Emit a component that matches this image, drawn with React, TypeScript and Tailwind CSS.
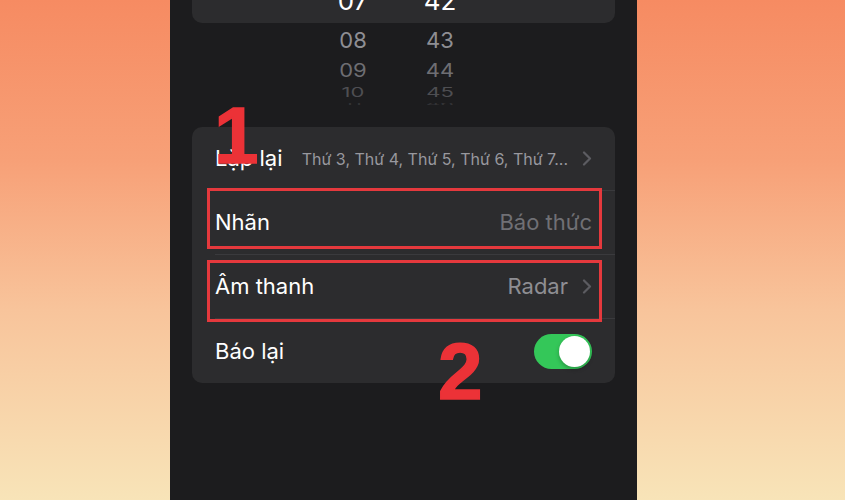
import { useState } from "react";

type WheelRow = {
  hour: string;
  minute: string;
  height: string;
  className: string;
};

// rows under the selected time, shrinking as the wheel turns away
const wheelRows: WheelRow[] = [
  { hour: "08", minute: "43", height: "h-[34px] leading-[34px]", className: "text-[#8e8e93]" },
  { hour: "09", minute: "44", height: "h-[26px] leading-[26px]", className: "text-[#6e6e73] scale-y-[0.85]" },
  { hour: "10", minute: "45", height: "h-[18px] leading-[18px]", className: "text-[#4e4e52] scale-y-[0.6]" },
  { hour: "11", minute: "46", height: "h-[6px] leading-[6px]", className: "text-[#3a3a3d] scale-y-[0.25]" },
];

const Chevron = () => (
  <svg width="10" height="15" viewBox="0 0 10 15" fill="none" className="shrink-0">
    <polyline
      points="2,1.5 8,7.5 2,13.5"
      stroke="#5c5c61"
      strokeWidth="2.2"
      strokeLinecap="round"
      strokeLinejoin="round"
    />
  </svg>
);

const Row = ({ children, last }: { children: React.ReactNode; last?: boolean }) => (
  <div className="pl-[23px]">
    <div
      className={`h-[64px] flex items-center justify-between pr-[23px] ${
        last ? "" : "border-b border-[#3a3a3d]"
      }`}
    >
      {children}
    </div>
  </div>
);

const App = () => {
  const [snooze, setSnooze] = useState(true);

  return (
    <div className="w-[845px] h-[500px] flex bg-[linear-gradient(180deg,#f68b62_0%,#f7a077_32%,#f8c49b_62%,#f8e4b8_100%)] font-['Inter',sans-serif] overflow-hidden">
      <div className="ml-[170px] w-[467px] h-full bg-[#1c1c1e] relative">
        {/* time wheel */}
        <div className="h-[127px] overflow-hidden">
          <div className="mx-[22px] h-[23px] rounded-b-[10px] bg-[#2c2c2e] overflow-hidden">
            <div className="flex pl-[131px] gap-[27px] -mt-[15px] text-white text-[26px] leading-[32px]">
              <div className="w-[60px] text-center">07</div>
              <div className="w-[60px] text-center">42</div>
            </div>
          </div>
          {wheelRows.map((row) => (
            <div
              key={row.hour}
              className={`flex pl-[153px] gap-[27px] text-[22px] overflow-hidden ${row.height} ${row.className}`}
            >
              <div className="w-[60px] text-center">{row.hour}</div>
              <div className="w-[60px] text-center">{row.minute}</div>
            </div>
          ))}
        </div>

        {/* settings list */}
        <div className="mx-[22px] rounded-[10px] bg-[#2c2c2e] relative text-white text-[22px]">
          <Row>
            <span>Lặp lại</span>
            <div className="flex items-center gap-[14px]">
              <span className="text-[16px] text-[#98989e]">Thứ 3, Thứ 4, Thứ 5, Thứ 6, Thứ 7...</span>
              <Chevron />
            </div>
          </Row>
          <Row>
            <span>Nhãn</span>
            <span className="text-[#707075]">Báo thức</span>
          </Row>
          <Row>
            <span>Âm thanh</span>
            <div className="flex items-center gap-[14px]">
              <span className="text-[#8e8e93]">Radar</span>
              <Chevron />
            </div>
          </Row>
          <Row last>
            <span>Báo lại</span>
            <button
              onClick={() => setSnooze(!snooze)}
              className={`w-[58px] h-[35px] rounded-full flex items-center px-[2px] ${
                snooze ? "bg-[#34c759] justify-end" : "bg-[#3a3a3d] justify-start"
              }`}
            >
              <span className="w-[31px] h-[31px] rounded-full bg-white shadow-[0_2px_4px_rgba(0,0,0,0.25)]" />
            </button>
          </Row>

          {/* highlight boxes */}
          <div className="absolute left-[15px] top-[61px] w-[395px] h-[61px] border-[3px] border-[#e5393d]" />
          <div className="absolute left-[15px] top-[133px] w-[395px] h-[62px] border-[3px] border-[#e5393d]" />
        </div>

        {/* step numbers */}
        <div className="absolute left-[44px] top-[96px] font-['Liberation_Sans',sans-serif] font-bold text-[80px] leading-none text-[#ec3237] [-webkit-text-stroke:1.5px_#ec3237]">
          1
        </div>
        <div className="absolute left-[268px] top-[332px] font-['Liberation_Sans',sans-serif] font-bold text-[80px] leading-none text-[#ec3237] [-webkit-text-stroke:1.5px_#ec3237]">
          2
        </div>
      </div>
    </div>
  );
};

export default App;
